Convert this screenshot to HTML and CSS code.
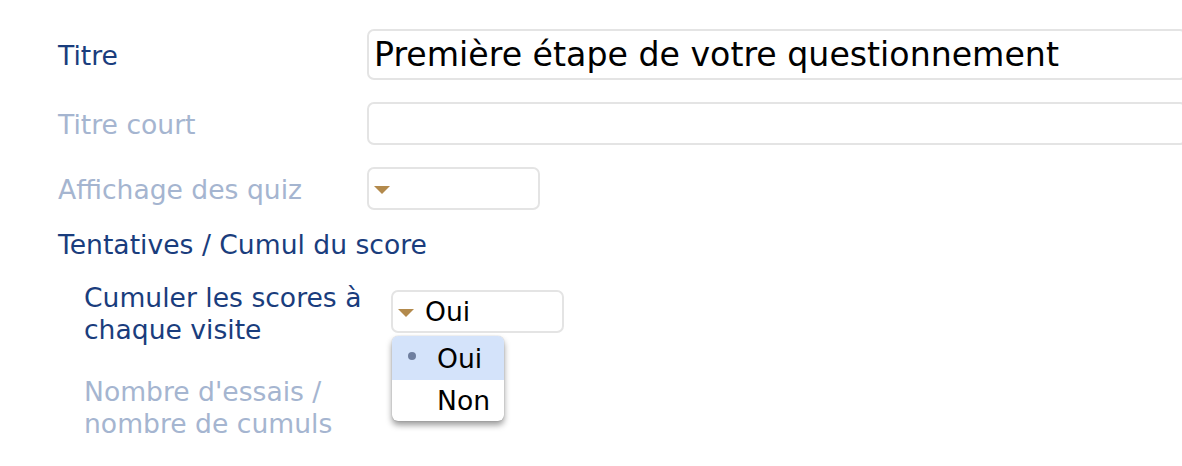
FILE: index.html
```html
<!DOCTYPE html>
<html lang="fr">
<head>
<meta charset="utf-8">
<link rel="stylesheet" href="styles.css">
</head>
<body>
<div class="page">
  <div class="row row-title">
    <label class="lbl">Titre</label>
    <div class="field big">Première étape de votre questionnement</div>
  </div>
  <div class="row">
    <label class="lbl dim">Titre court</label>
    <div class="field"></div>
  </div>
  <div class="row">
    <label class="lbl dim">Affichage des quiz</label>
    <div class="select"><span class="caret"></span></div>
  </div>
  <div class="section">Tentatives / Cumul du score</div>
  <div class="sub">
    <div class="row row-top">
      <label class="lbl two">Cumuler les scores à<br>chaque visite</label>
      <div class="select-wrap">
        <div class="select"><span class="caret"></span><span class="val">Oui</span></div>
        <ul class="menu">
          <li class="item active"><span class="dot"></span>Oui</li>
          <li class="item">Non</li>
        </ul>
      </div>
    </div>
    <div class="row row-top">
      <label class="lbl two dim">Nombre d'essais /<br>nombre de cumuls</label>
      <div></div>
    </div>
  </div>
</div>
</body>
</html>
```

FILE: styles.css
```css
html, body {
  margin: 0;
  padding: 0;
  background: #ffffff;
  overflow: hidden;
}
body {
  font-family: "DejaVu Sans", Verdana, sans-serif;
  width: 1182px;
  height: 466px;
}
.page {
  padding: 29px 0 0 58px;
}
.row {
  display: grid;
  grid-template-columns: 309px 1fr;
  align-items: center;
  margin-bottom: 22px;
}
.lbl {
  font-size: 26.6px;
  color: #1a3d7d;
  line-height: 32px;
  padding-top: 2px;
}
.lbl.dim {
  color: #a5b5d0;
}
.field {
  box-sizing: border-box;
  height: 43px;
  width: 820px;
  border: 2px solid #e4e4e4;
  border-radius: 7px;
  background: #fff;
  padding: 0 5px;
  display: flex;
  align-items: center;
  font-size: 33.2px;
  color: #000;
  white-space: nowrap;
}
.field.big {
  height: 51px;
}
.select {
  box-sizing: border-box;
  width: 173px;
  height: 43px;
  border: 2px solid #e4e4e4;
  border-radius: 7px;
  background: #fff;
  display: flex;
  align-items: center;
  padding-left: 5px;
  font-size: 26.6px;
  color: #000;
}
.caret {
  width: 0;
  height: 0;
  border-left: 8px solid transparent;
  border-right: 8px solid transparent;
  border-top: 8px solid #b38a4c;
  margin-top: 2px;
}
.val {
  margin-left: 11px;
}
.section {
  font-size: 26.6px;
  color: #1a3d7d;
  line-height: 32px;
  margin-top: -3px;
}
.sub {
  padding-left: 26px;
  margin-top: 29px;
}
.sub .row {
  grid-template-columns: 307px 1fr;
  margin-bottom: 38px;
}
.row-top {
  align-items: start;
}
.lbl.two {
  line-height: 32px;
  padding-top: 0;
  margin-top: -8px;
}
.select-wrap {
  position: relative;
  width: 173px;
}
.menu {
  position: absolute;
  left: 1px;
  top: 46px;
  width: 112px;
  margin: 0;
  padding: 0;
  list-style: none;
  background: #fff;
  border-radius: 6px;
  box-shadow: 0 4px 6px rgba(0, 0, 0, 0.4), 0 0 1px rgba(0, 0, 0, 0.35);
  overflow: hidden;
  z-index: 2;
}
.item {
  position: relative;
  height: 41px;
  display: flex;
  align-items: center;
  padding-left: 45px;
  font-size: 26.6px;
  color: #000;
}
.item.active {
  background: #d4e3fa;
  height: 44px;
}
.dot {
  position: absolute;
  left: 16px;
  top: 16px;
  width: 8px;
  height: 8px;
  border-radius: 50%;
  background: #6f7f9f;
}
```
